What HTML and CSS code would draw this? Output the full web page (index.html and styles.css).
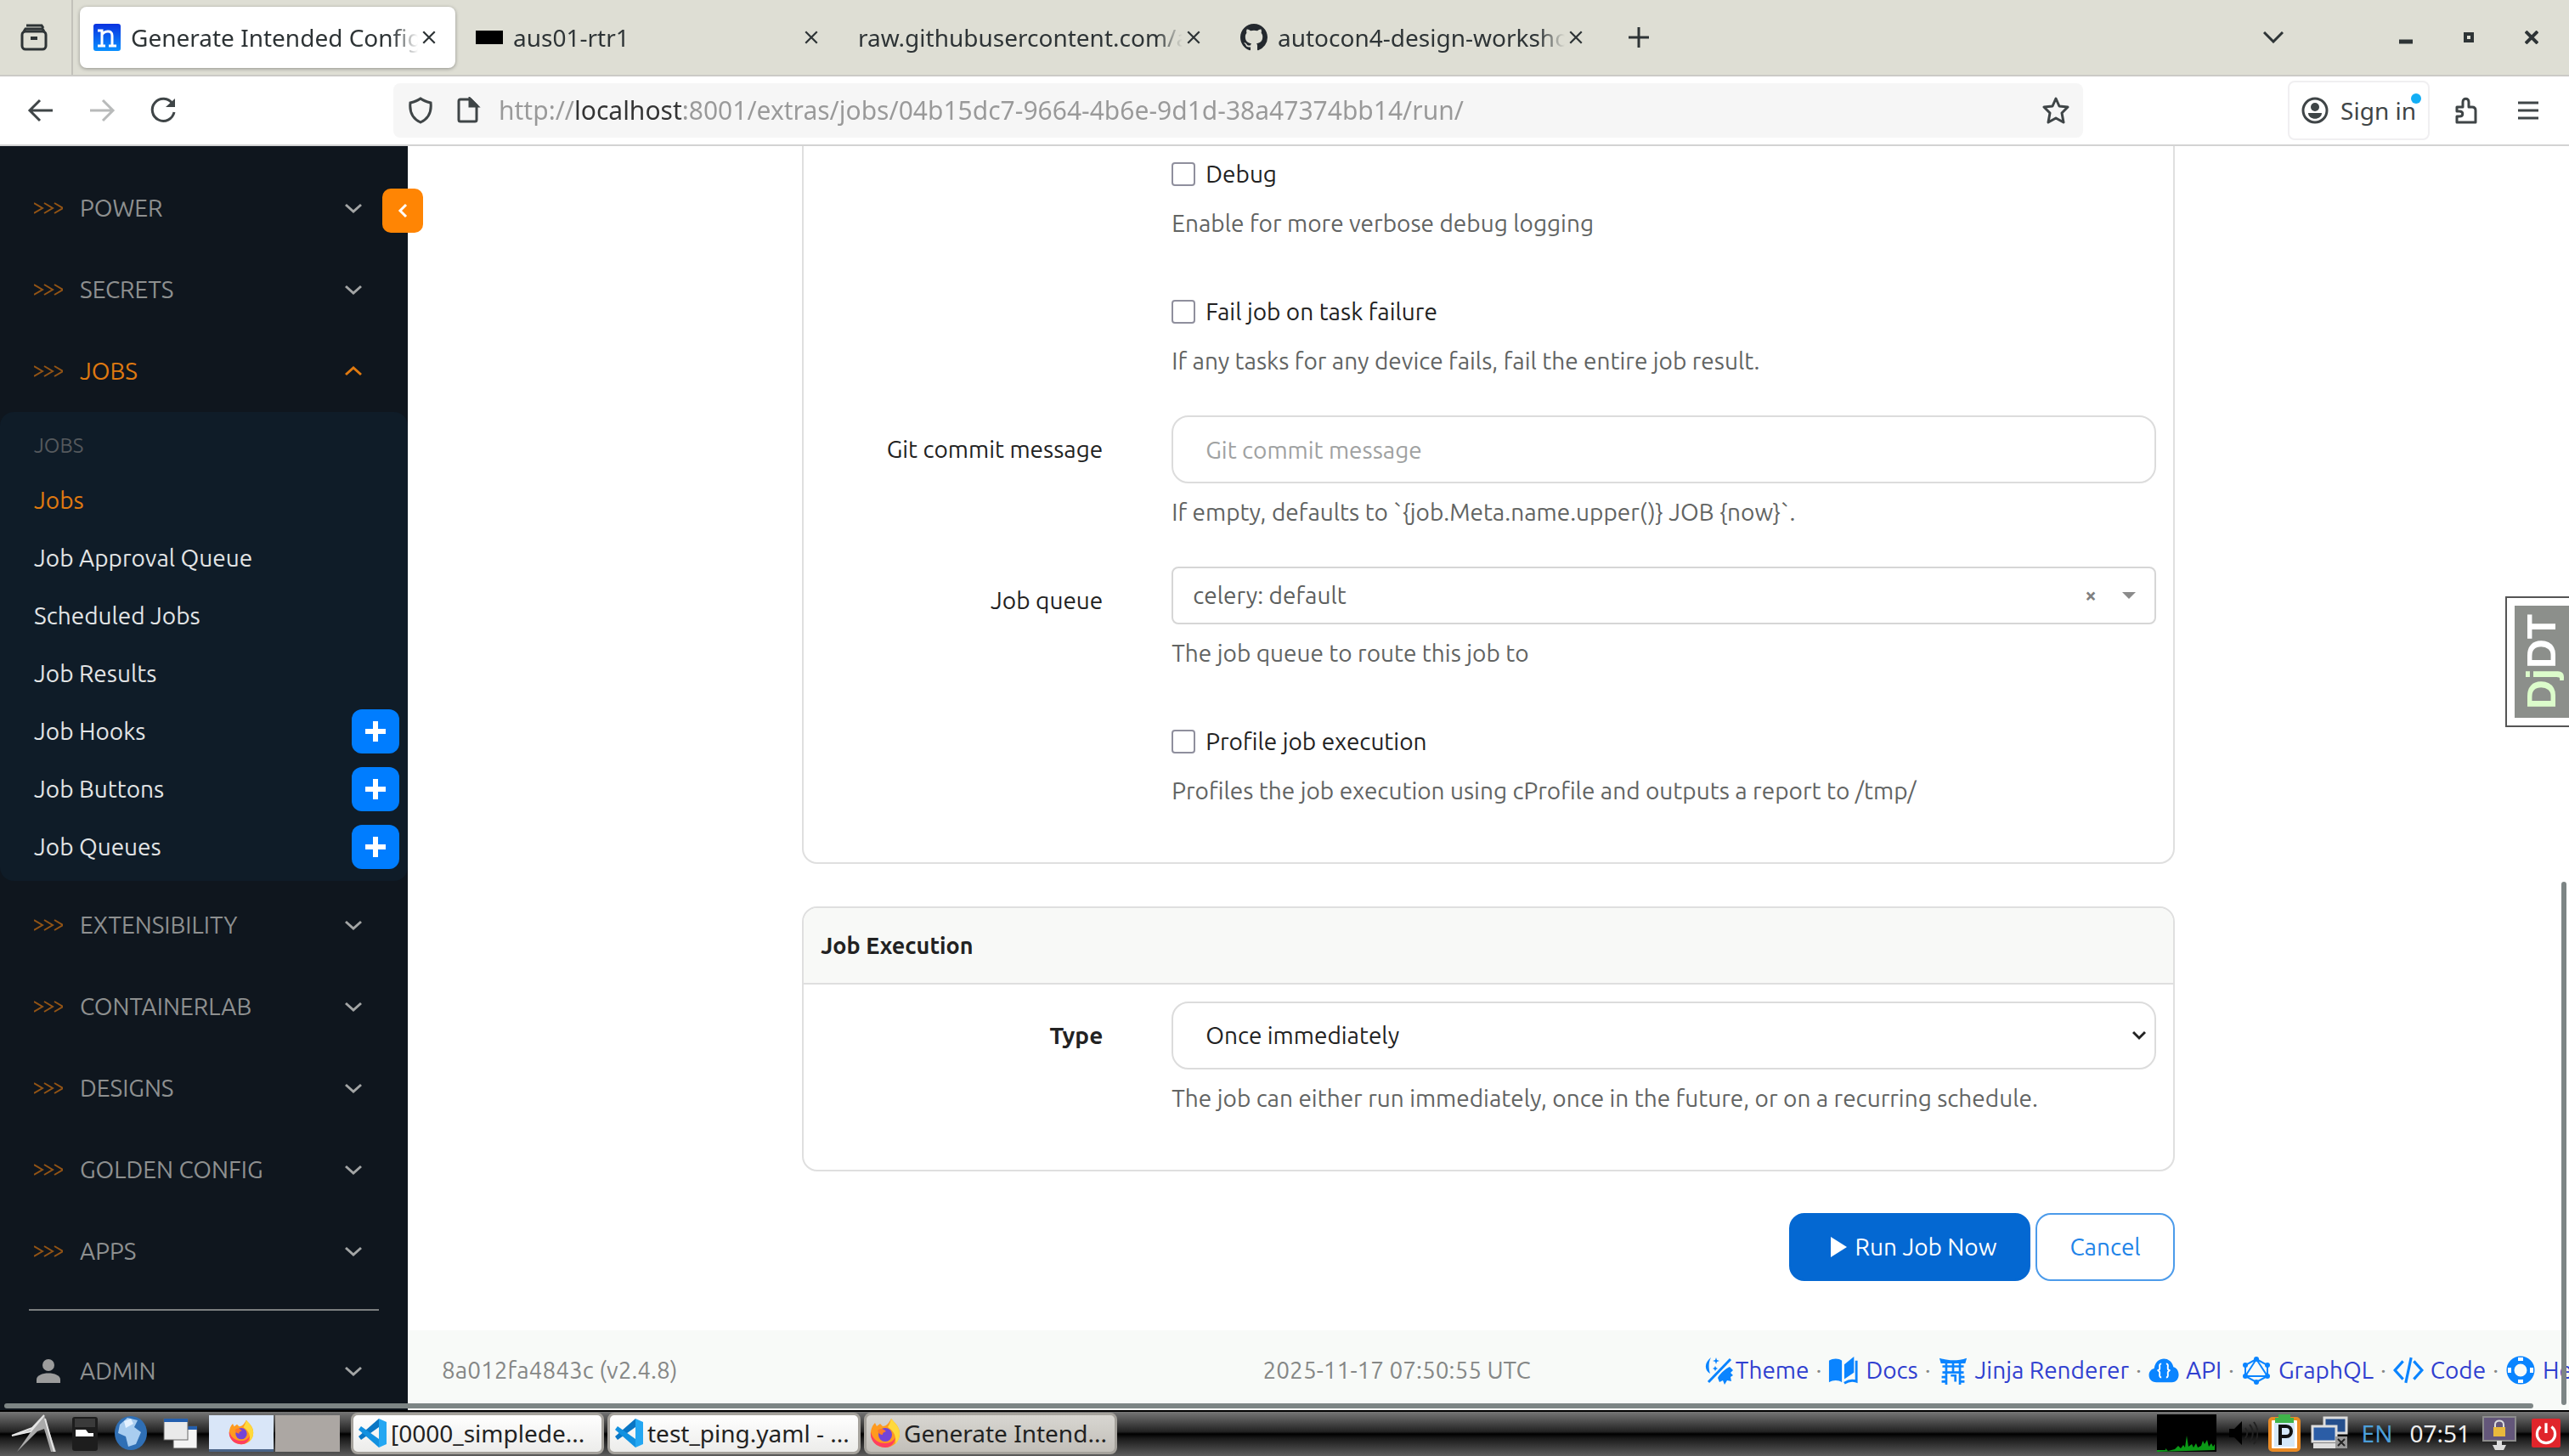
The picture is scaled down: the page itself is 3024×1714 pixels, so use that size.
FILE: index.html
```html
<!DOCTYPE html>
<html lang="en">
<head>
  <meta charset="UTF-8" />
  <meta name="viewport" content="width=device-width, initial-scale=1.0"/>
  <title>Generate Intended Configurations</title>
  <link rel="stylesheet" href="styles.css">
</head>
<body>

<!-- Shared icons -->
<svg class="sprite" aria-hidden="true">
  <symbol id="i-close" viewBox="0 0 16 16"><path d="M2 2l12 12M14 2L2 14" fill="none" stroke="currentColor" stroke-width="2"/></symbol>
  <symbol id="i-down" viewBox="0 0 20 12"><path d="M1 2l9 8 9-8" fill="none" stroke="currentColor" stroke-width="3"/></symbol>
  <symbol id="i-up" viewBox="0 0 20 12"><path d="M1 10l9-8 9 8" fill="none" stroke="currentColor" stroke-width="3"/></symbol>
  <symbol id="i-arrows" viewBox="0 0 34 14"><path d="M0 1l10 6-10 6M12 1l10 6-10 6M24 1l10 6-10 6" fill="none" stroke="currentColor" stroke-width="2"/></symbol>
  <symbol id="i-plus" viewBox="0 0 24 24"><path d="M12 0v24M0 12h24" fill="none" stroke="currentColor" stroke-width="6"/></symbol>
  <symbol id="i-vscode" viewBox="0 0 36 36"><path d="M26 1l9 4v26l-9 4z" fill="#24a7f2"/><path d="M26 1L2 22l3 4 21-15z" fill="#0a76c4"/><path d="M26 35L2 14l3-4 21 15z" fill="#1291e0"/></symbol>
  <symbol id="i-firefox" viewBox="0 0 36 36">
    <path d="M25 1c4 5 10 9 10 18a17 16 0 0 1-34 0C1 13 3 9 6 6l2 4 4-3 3 3c5 0 8-5 10-9z" fill="#ff9a1f"/>
    <path d="M25 1c4 5 10 9 10 18 0 5-2 9-5 12 1-9-1-15-9-20 2-3 3-6 4-10z" fill="#ffd93b"/>
    <path d="M1 17c3 10 10 13 17 13 6 0 10-3 12-7-1 8-6 12-12 12A17 16 0 0 1 1 17z" fill="#ff3f5f"/>
    <circle cx="18" cy="20" r="8" fill="#7544d6"/><path d="M9 15c4-4 8-1 10 1-2 1-4 1-4 4-3 0-5-2-6-5z" fill="#ff7a2a"/>
  </symbol>
</svg>

<!-- Browser tabs -->
<header class="tabbar">
  <button class="tab-history" aria-label="Recent tabs">
    <svg viewBox="0 0 32 32"><path d="M7 2h18l2 3M4 9l2-3h20l2 3" /><rect x="2" y="9" width="28" height="21" rx="4"/><path d="M12 17h8" stroke-width="4"/></svg>
  </button>
  <div class="tabs">
    <div class="tab active">
      <svg class="favicon" viewBox="0 0 32 32"><defs><linearGradient id="nb" x2="0" y2="1"><stop offset="0" stop-color="#0a32e0"/><stop offset="1" stop-color="#0a90ff"/></linearGradient></defs><rect width="32" height="32" rx="3" fill="url(#nb)"/><path d="M5 8h5v17M5 26h9M10 13c2-4 12-7 12 1v12M18 26h9" fill="none" stroke="#fff" stroke-width="3"/></svg>
      <span class="tab-title">Generate Intended Config</span>
      <button class="tab-close" aria-label="Close tab"><svg><use href="#i-close"/></svg></button>
    </div>
    <div class="tab">
      <svg class="favicon" viewBox="0 0 32 32"><path d="M0 8h32v16H0z"/></svg>
      <span class="tab-title">aus01-rtr1</span>
      <button class="tab-close" aria-label="Close tab"><svg><use href="#i-close"/></svg></button>
    </div>
    <div class="tab">
      <span class="tab-title">raw.githubusercontent.com/a</span>
      <button class="tab-close" aria-label="Close tab"><svg><use href="#i-close"/></svg></button>
    </div>
    <div class="tab">
      <svg class="favicon" viewBox="0 0 16 16"><path fill="#24292e" d="M8 0C3.58 0 0 3.58 0 8c0 3.54 2.29 6.53 5.47 7.59.4.07.55-.17.55-.38 0-.19-.01-.82-.01-1.49-2.01.37-2.53-.49-2.69-.94-.09-.23-.48-.94-.82-1.13-.28-.15-.68-.52-.01-.53.63-.01 1.08.58 1.23.82.72 1.21 1.87.87 2.33.66.07-.52.28-.87.51-1.07-1.78-.2-3.64-.89-3.64-3.95 0-.87.31-1.59.82-2.15-.08-.2-.36-1.02.08-2.12 0 0 .67-.21 2.2.82.64-.18 1.32-.27 2-.27s1.36.09 2 .27c1.53-1.04 2.2-.82 2.2-.82.44 1.1.16 1.92.08 2.12.51.56.82 1.27.82 2.15 0 3.07-1.87 3.75-3.65 3.95.29.25.54.73.54 1.48 0 1.07-.01 1.93-.01 2.2 0 .21.15.46.55.38A8.01 8.01 0 0 0 16 8c0-4.42-3.58-8-8-8z"/></svg>
      <span class="tab-title">autocon4-design-worksho</span>
      <button class="tab-close" aria-label="Close tab"><svg><use href="#i-close"/></svg></button>
    </div>
  </div>
  <button class="tab-new" aria-label="New tab"><svg viewBox="0 0 24 24"><path d="M12 0v24M0 12h24"/></svg></button>
  <div class="window-controls">
    <button class="tab-list" aria-label="List all tabs"><svg viewBox="0 0 24 14"><path d="M1 1l11 11L23 1"/></svg></button>
    <button aria-label="Minimize"><svg viewBox="0 0 16 16"><path d="M0 13h16" stroke-width="5"/></svg></button>
    <button aria-label="Maximize"><svg viewBox="0 0 16 16"><path d="M4 4h8v8H4z" stroke-width="4"/></svg></button>
    <button aria-label="Close window"><svg viewBox="0 0 16 16"><path d="M1 1l14 14M15 1L1 15" stroke-width="4"/></svg></button>
  </div>
</header>

<!-- Browser toolbar -->
<div class="toolbar">
  <div class="nav-buttons">
    <button aria-label="Back"><svg viewBox="0 0 32 32"><path d="M30 16H3M15 4L3 16l12 12"/></svg></button>
    <button aria-label="Forward" disabled><svg viewBox="0 0 32 32"><path d="M2 16h27M17 4l12 12-12 12"/></svg></button>
    <button aria-label="Reload"><svg viewBox="0 0 32 32"><path d="M27 8a13 13 0 1 0 2 10"/><path d="M30 2v10H19z" fill="currentColor" stroke="none"/></svg></button>
  </div>
  <div class="urlbar">
    <svg viewBox="0 0 32 32"><path d="M16 2c4 3 8 4 12 5 1 9-1 18-12 23C5 25 3 16 4 7c4-1 8-2 12-5z"/></svg>
    <svg viewBox="0 0 32 32"><path d="M7 3h12l7 7v17q0 2-2 2H7q-2 0-2-2V5q0-2 2-2z"/><path d="M18 2l9 9h-9z" fill="currentColor"/></svg>
    <input class="url" type="text" aria-label="Address" value="http://localhost:8001/extras/jobs/04b15dc7-9664-4b6e-9d1d-38a47374bb14/run/">
    <button aria-label="Bookmark"><svg viewBox="0 0 32 32"><path d="M16 2l4 9 10 1-7 7 2 11-9-5-9 5 2-11-7-7 10-1z" stroke-linejoin="round"/></svg></button>
  </div>
  <div class="toolbar-end">
    <button class="signin">
      <svg viewBox="0 0 32 32"><circle cx="16" cy="16" r="14"/><circle cx="16" cy="12" r="5" fill="currentColor" stroke="none"/><path d="M8 19h16c0 9-16 9-16 0z" fill="currentColor" stroke="none"/></svg>
      <span class="signin-label">Sign in<span class="dot"></span></span>
    </button>
    <button aria-label="Extensions"><svg viewBox="0 0 32 32"><path d="M4 12h7V6c0-5 7-5 7 0v6h4q4 0 4 4v14H4v-7h3c5 0 5-6 0-6H4z" stroke-linejoin="round"/></svg></button>
    <button aria-label="Menu"><svg viewBox="0 0 32 32"><path d="M4 7h24M4 16h24M4 25h24"/></svg></button>
  </div>
</div>

<!-- Page -->
<div class="page">
  <nav class="sidebar">
    <button class="group"><svg class="arrows"><use href="#i-arrows"/></svg>POWER<svg class="chev"><use href="#i-down"/></svg></button>
    <button class="group"><svg class="arrows"><use href="#i-arrows"/></svg>SECRETS<svg class="chev"><use href="#i-down"/></svg></button>
    <button class="group open"><svg class="arrows"><use href="#i-arrows"/></svg>JOBS<svg class="chev"><use href="#i-up"/></svg></button>
    <div class="submenu">
      <h6>JOBS</h6>
      <ul>
        <li class="active"><a href="#">Jobs</a></li>
        <li><a href="#">Job Approval Queue</a></li>
        <li><a href="#">Scheduled Jobs</a></li>
        <li><a href="#">Job Results</a></li>
        <li><a href="#">Job Hooks</a><button class="add" aria-label="Add job hook"><svg><use href="#i-plus"/></svg></button></li>
        <li><a href="#">Job Buttons</a><button class="add" aria-label="Add job button"><svg><use href="#i-plus"/></svg></button></li>
        <li><a href="#">Job Queues</a><button class="add" aria-label="Add job queue"><svg><use href="#i-plus"/></svg></button></li>
      </ul>
    </div>
    <button class="group"><svg class="arrows"><use href="#i-arrows"/></svg>EXTENSIBILITY<svg class="chev"><use href="#i-down"/></svg></button>
    <button class="group"><svg class="arrows"><use href="#i-arrows"/></svg>CONTAINERLAB<svg class="chev"><use href="#i-down"/></svg></button>
    <button class="group"><svg class="arrows"><use href="#i-arrows"/></svg>DESIGNS<svg class="chev"><use href="#i-down"/></svg></button>
    <button class="group"><svg class="arrows"><use href="#i-arrows"/></svg>GOLDEN CONFIG<svg class="chev"><use href="#i-down"/></svg></button>
    <button class="group"><svg class="arrows"><use href="#i-arrows"/></svg>APPS<svg class="chev"><use href="#i-down"/></svg></button>
    <hr>
    <button class="group"><svg class="user" viewBox="0 0 34 28"><circle cx="17" cy="7" r="7"/><path d="M3 28v-4c0-10 28-10 28 0v4z"/></svg>ADMIN<svg class="chev"><use href="#i-down"/></svg></button>
    <button class="collapse" aria-label="Collapse menu"><svg viewBox="0 0 12 18"><path d="M10 2L3 9l7 7"/></svg></button>
  </nav>

  <main>
    <form class="job-form">
      <section class="card card-data">
        <div class="field">
          <div class="control check">
            <label><input type="checkbox">Debug</label>
            <p class="help">Enable for more verbose debug logging</p>
          </div>
        </div>
        <div class="field">
          <div class="control check">
            <label><input type="checkbox">Fail job on task failure</label>
            <p class="help">If any tasks for any device fails, fail the entire job result.</p>
          </div>
        </div>
        <div class="field">
          <label class="name" for="commit">Git commit message</label>
          <div class="control">
            <input class="text" id="commit" type="text" placeholder="Git commit message">
            <p class="help">If empty, defaults to `{job.Meta.name.upper()} JOB {now}`.</p>
          </div>
        </div>
        <div class="field">
          <label class="name" for="queue">Job queue</label>
          <div class="control">
            <div class="select2">
              <select id="queue"><option>celery: default</option></select>
              <button type="button" class="clear" aria-label="Clear">×</button>
              <span class="caret"></span>
            </div>
            <p class="help">The job queue to route this job to</p>
          </div>
        </div>
        <div class="field">
          <div class="control check">
            <label><input type="checkbox">Profile job execution</label>
            <p class="help">Profiles the job execution using cProfile and outputs a report to /tmp/</p>
          </div>
        </div>
      </section>

      <section class="card card-exec">
        <h2>Job Execution</h2>
        <div class="field">
          <label class="name" for="type"><b>Type</b></label>
          <div class="control">
            <div class="select-wrap">
              <select class="text" id="type"><option>Once immediately</option></select>
              <svg viewBox="0 0 16 12"><path d="M1 2l7 7 7-7"/></svg>
            </div>
            <p class="help">The job can either run immediately, once in the future, or on a recurring schedule.</p>
          </div>
        </div>
      </section>

      <div class="actions">
        <button type="submit" class="btn primary"><svg viewBox="0 0 20 24"><path d="M1 0l19 12L1 24z"/></svg>Run Job Now</button>
        <a class="btn" href="#">Cancel</a>
      </div>
    </form>

    <footer class="footer">
      <span>8a012fa4843c (v2.4.8)</span>
      <span>2025-11-17 07:50:55 UTC</span>
      <div class="links">
        <a class="theme" href="#"><svg viewBox="0 0 34 34"><path d="M8 2C0 8 0 17 7 21 5 14 5 8 8 2z"/><path d="M5 31L31 4" fill="none" stroke="currentColor" stroke-width="3"/><path d="M14 2l1 3 3 1-3 1-1 3-1-3-3-1 3-1zM13 12l1 2 2 1-2 1-1 2-1-2-2-1 2-1z"/><path d="M30 13c-6 3-12 9-14 13l2 5 4-2 2 5 3-5 5 1-1-5 3-2-3-3 3-3z"/></svg>Theme</a><i>·</i>
        <a href="#"><svg viewBox="0 0 38 34"><path d="M1 5c5-3 12-3 16 0v27c-4-3-11-3-16 0zM20 10L32 0v20L20 28z"/><path d="M35 5v26c-5-2-10-1-15 2" fill="none" stroke="currentColor" stroke-width="3"/></svg>Docs</a><i>·</i>
        <a href="#"><svg viewBox="0 0 38 38"><path d="M1 3c12 4 24 4 36 0l-2 7H3z"/><path d="M5 14h28M5 22h28M10 9v29M19 9v13M28 9v29M4 28h7M4 34h7M27 28h7M27 34h7M16 26h6v8" fill="none" stroke="currentColor" stroke-width="3"/></svg>Jinja Renderer</a><i>·</i>
        <a href="#"><svg viewBox="0 0 38 30"><path d="M10 30C-2 30-2 15 7 13 9-3 28-3 31 11c9 2 9 19-2 19z"/><path d="M16 7c-3 0-2 3-2 5s-1 3-2 3 2 1 2 3-1 6 2 6M22 7c3 0 2 3 2 5s1 3 2 3-2 1-2 3 1 6-2 6" fill="none" stroke="#fff" stroke-width="2"/></svg>API</a><i>·</i>
        <a href="#"><svg viewBox="0 0 34 34"><path d="M17 4L4 11v13l13 7 13-7V11zM17 4L4 24h26z" fill="none" stroke="currentColor" stroke-width="2"/><circle cx="17" cy="4" r="3"/><circle cx="4" cy="11" r="3"/><circle cx="30" cy="11" r="3"/><circle cx="4" cy="24" r="3"/><circle cx="30" cy="24" r="3"/><circle cx="17" cy="31" r="3"/></svg>GraphQL</a><i>·</i>
        <a href="#"><svg viewBox="0 0 34 30"><path d="M11 5L2 15l9 10M23 5l9 10-9 10M20 1l-6 28" fill="none" stroke="currentColor" stroke-width="3"/></svg>Code</a><i>·</i>
        <a href="#"><svg viewBox="0 0 34 34"><circle cx="17" cy="17" r="12" fill="none" stroke="currentColor" stroke-width="9"/><path d="M14 4h6M14 30h6M4 14v6M30 14v6" stroke="#fff" stroke-width="4"/></svg>Help</a>
      </div>
    </footer>

    <div class="djdt"><button aria-label="Show toolbar"><span><b>Dj</b>DT</span></button></div>
  </main>
  <div class="scroll-y"></div>
  <div class="scroll-x"></div>
</div>

<!-- Desktop panel -->
<div class="taskbar">
  <div class="launchers">
    <button aria-label="Menu"><svg viewBox="0 0 56 44"><path d="M42 1L28 16 4 25l22-4L10 44 34 20l8-3 8 27h6L46 14z" fill="#aaa"/><path d="M42 1L28 16 4 25l22-5zM43 5l11 39" fill="none" stroke="#e4e4e4" stroke-width="2"/></svg></button>
    <button aria-label="Files"><svg viewBox="0 0 32 44"><rect x="1" y="3" width="30" height="40" rx="3" fill="#1d1d1d"/><path d="M5 26V18h12l3 4h6v4z" fill="#fff"/><rect x="4" y="5" width="24" height="10" fill="#3a3a3a"/></svg></button>
    <button aria-label="Web browser"><svg viewBox="0 0 40 44"><ellipse cx="20" cy="22" rx="19" ry="20" fill="#2f6fb5"/><path d="M7 12l9-8 12 3-4 8 8 6-6 14-9 3-3-12-9-4z" fill="#a9cdf0"/><path d="M12 8l8-3 3 6-9 5z" fill="#e4f1ff"/></svg></button>
    <button aria-label="Show desktop"><svg viewBox="0 0 40 40"><rect x="12" y="12" width="28" height="26" fill="#f4f4f4" stroke="#555"/><path d="M12 12h28v4H12z" fill="#245fae"/><rect x="1" y="3" width="28" height="25" fill="#eaeaea" stroke="#666"/><path d="M1 3h28v4H1z" fill="#245fae"/></svg></button>
  </div>
  <div class="pager">
    <button class="on" aria-label="Desktop 1"><svg><use href="#i-firefox"/></svg></button>
    <button aria-label="Desktop 2"></button>
  </div>
  <div class="tasks">
    <button><svg><use href="#i-vscode"/></svg><span>[0000_simplede...</span></button>
    <button><svg><use href="#i-vscode"/></svg><span>test_ping.yaml - ...</span></button>
    <button class="on"><svg><use href="#i-firefox"/></svg><span>Generate Intend...</span></button>
  </div>
  <div class="tray">
    <svg class="cpu" viewBox="0 0 70 44"><path d="M0 0h70v44H0z"/><path d="M0 44v-2h10v-2l3 3 8-2 4-4 3 3 3-4 2 3 2-14 2 13 4-3 2 4 3-5 2 5 4-2 2-6 2 4 3-5 2 8 3-4 2 4 2-3v7z" fill="#0b9a16"/></svg>
    <svg class="vol" viewBox="0 0 36 36"><path d="M2 13h6l9-9v28l-9-9H2z"/><path d="M21 12c3 4 3 8 0 12M26 8c5 6 5 14 0 20M31 5c6 8 6 18 0 26" fill="none" stroke="#222" stroke-width="2"/></svg>
    <svg class="clip" viewBox="0 0 38 44"><rect x="2" y="5" width="34" height="37" rx="3" fill="#fff" stroke="#e98a24" stroke-width="4"/><path d="M7 10h24v28H7z" fill="#d5e8f8"/><path d="M12 0h14v4h4v6H8V4h4z" fill="#3fb54a"/><path d="M14 36V14h7c8 0 8 12 0 12h-6" fill="none" stroke="#111" stroke-width="4"/></svg>
    <svg class="net" viewBox="0 0 44 40"><rect x="16" y="2" width="26" height="18" fill="#254f8d" stroke="#ddd" stroke-width="3"/><rect x="2" y="12" width="28" height="18" fill="#2b5da6" stroke="#ddd" stroke-width="3"/><path d="M3 35h26" stroke="#ddd" stroke-width="6"/><path d="M29 24h14v14H29z" fill="#999"/><path d="M32 27l8 8M40 27l-8 8" stroke="#222" stroke-width="2"/></svg>
    <span class="lang">EN</span>
    <span class="clock">07:51</span>
    <svg class="lock" viewBox="0 0 40 42"><rect x="1" y="2" width="38" height="28" fill="#63567a" stroke="#8c8c8c" stroke-width="2"/><path d="M15 15v-4c0-6 10-6 10 0v4" fill="none" stroke="#ddd" stroke-width="2"/><rect x="13" y="14" width="14" height="11" fill="#e9b93c"/><path d="M17 30h6v5h5l-3 6H15l-3-6h5z" fill="#ddd"/></svg>
    <svg class="power" viewBox="0 0 32 32"><rect width="32" height="32" rx="2" fill="#e0252b"/><path d="M10 9a10 10 0 1 0 12 0M16 5v11" fill="none" stroke="#fff" stroke-width="3"/></svg>
  </div>
</div>

</body>
</html>
```
FILE: styles.css
```css
* { box-sizing: border-box; }

html, body {
  margin: 0; padding: 0;
  overflow: hidden;
}

body {
  display: flex;
  flex-direction: column;
  height: 100vh;
  font-family: Ubuntu, "Noto Sans", sans-serif;
  font-size: 28px;
  line-height: 40px;
  color: #222;
  background: #fff;
}

button, input, select {
  font: inherit;
  color: inherit;
  margin: 0; padding: 0;
  border: 0;
  background: none;
}

a { text-decoration: none; }
svg { display: block; flex: none; }
.sprite { position: absolute; width: 0; height: 0; }

/* Tabs */
.tabbar {
  display: flex;
  align-items: center;
  flex: none;
  height: 90px;
  background: #deded4;
  border-bottom: 2px solid #cbcac6;
  font-family: "Noto Sans", sans-serif;
  color: #2e3436;
}

.tabbar svg, .toolbar svg { fill: none; stroke: currentColor; stroke-width: 3; }
.tabbar .favicon { fill: #000; stroke: none; width: 32px; height: 32px; }

.tab-history {
  width: 86px; height: 88px;
  padding-left: 24px;
  border-right: 2px solid #c2c1ba;
}
.tab-history svg { width: 32px; height: 32px; }

.tabs { display: flex; gap: 8px; padding-left: 8px; }

.tab {
  display: flex;
  align-items: center;
  gap: 12px;
  width: 442px; height: 72px;
  padding: 0 22px 0 16px;
  border-radius: 8px;
}
.tab.active { background: #fff; box-shadow: 0 1px 4px rgba(0, 0, 0, 0.35); }

.tab-title {
  flex: 1;
  overflow: hidden;
  white-space: nowrap;
  mask-image: linear-gradient(to left, transparent, #000 30px);
}
.tab-close svg { width: 18px; height: 18px; }
.tab-close { margin-left: -8px; }
.tab-new { margin-left: 31px; }
.tab-new svg { width: 24px; height: 24px; }

.window-controls {
  display: flex;
  align-items: center;
  gap: 58px;
  margin-left: auto;
  padding-right: 36px;
}
.window-controls svg { width: 16px; height: 16px; }
.tab-list { margin-right: 78px; }
.window-controls .tab-list svg { width: 24px; height: 14px; }

/* Toolbar */
.toolbar {
  display: flex;
  align-items: center;
  flex: none;
  height: 82px;
  padding: 0 32px;
  border-bottom: 2px solid #d3d3d3;
  font-family: "Noto Sans", sans-serif;
  color: #3f4547;
}
.toolbar svg { width: 32px; height: 32px; }
.nav-buttons { display: flex; gap: 40px; width: 431px; }
.nav-buttons button:disabled { color: #b8baba; }

.urlbar {
  display: flex;
  align-items: center;
  gap: 24px;
  width: 67.2%;
  height: 64px;
  padding: 0 16px;
  background: #f6f6f6;
  border-radius: 8px;
}

.url {
  flex: 1;
  margin-left: -4px;
  font-size: 30px;
  color: transparent;
  background: linear-gradient(to right, #999 89px, #333 89px, #333 216px, #999 216px);
  background-clip: text;
}

.toolbar-end {
  display: flex;
  align-items: center;
  gap: 28px;
  margin-left: auto;
}
.toolbar-end svg { width: 32px; height: 32px; }
.toolbar-end button + button + button { margin-left: 12px; }

.signin {
  display: flex;
  align-items: center;
  gap: 14px;
  height: 70px;
  padding: 0 14px;
  border: 2px solid #f0eff1;
  border-radius: 8px;
}
.signin-label { position: relative; }
.dot {
  position: absolute;
  top: 0; right: -6px;
  width: 12px; height: 12px;
  border-radius: 50%;
  background: #12aef5;
}

/* Page */
.page { position: relative; display: flex; flex: 1; min-height: 0; }

.sidebar {
  position: relative;
  flex: none;
  width: 480px;
  padding-top: 25px;
  background: #0f161e;
}

.group {
  display: flex;
  align-items: center;
  gap: 20px;
  width: 100%; height: 96px;
  padding: 0 54px 0 40px;
  color: #8e9090;
}
.group.open { color: #e07a10; }
.group .arrows { width: 34px; height: 14px; color: #935415; }
.group .user { width: 34px; height: 28px; fill: #9c9c9c; }
.group .chev { width: 20px; height: 12px; margin-left: auto; color: #a3a5a5; }
.group.open .chev { color: #e07a10; }

.submenu {
  margin-bottom: 4px;
  padding: 20px 0 6px 40px;
  background: #0f1c28;
  border-radius: 16px;
}
.submenu h6 {
  margin: 0 0 10px;
  font-size: 24px;
  font-weight: 400;
  color: #55595d;
}
.submenu ul { margin: 0; padding: 0; list-style: none; }
.submenu li {
  display: flex;
  align-items: center;
  justify-content: space-between;
  height: 68px;
  padding-right: 10px;
}
.submenu a { color: #e2e4e5; }
.submenu .active a { color: #e07a10; }

.add {
  display: grid;
  place-items: center;
  width: 56px; height: 52px;
  color: #fff;
  background: #007dff;
  border-radius: 12px;
}
.add svg { width: 24px; height: 24px; }

.sidebar hr {
  margin: 20px 34px 23px;
  border: 0;
  border-top: 2px solid #7b7e7f;
}

.collapse {
  position: absolute;
  top: 50px; right: -18px;
  z-index: 2;
  display: grid;
  place-items: center;
  width: 48px; height: 52px;
  background: #ff8504;
  border-radius: 10px;
}
.collapse svg { width: 12px; height: 18px; fill: none; stroke: #fff; stroke-width: 3; }

main {
  position: relative;
  display: flex;
  flex-direction: column;
  flex: 1;
  min-width: 0;
  overflow: hidden;
}

.job-form { width: 63.5%; margin: 0 auto; }

.card {
  border: 2px solid #dfdfdf;
  border-radius: 18px;
}
.card-data {
  padding: 13px 20px 20px;
  border-top: 0;
  border-top-left-radius: 0;
  border-top-right-radius: 0;
}
.card-exec { margin-top: 50px; }

.card h2 {
  margin: 0;
  padding: 24px 20px;
  font-size: 27px;
  background: #f8f9f7;
  border-bottom: 2px solid #dfdfdf;
  border-radius: 16px 16px 0 0;
}

.field {
  display: grid;
  grid-template-columns: 332px 1fr;
  column-gap: 81px;
  margin-bottom: 44px;
}
.field .name { line-height: 80px; text-align: right; }
.field:last-child { padding-bottom: 44px; margin-bottom: 0; }
.card-exec .field { padding: 20px 20px 64px; }
.control { grid-column: 2; }

.check { padding-top: 20px; }
.field:first-child .check { padding-top: 0; }
.check label { display: flex; align-items: center; gap: 12px; }
.check input {
  appearance: none;
  width: 28px; height: 28px;
  border: 2px solid #8f8f9d;
  border-radius: 4px;
  background: #fff;
}

.help { margin: 14px 0 0; color: #626463; }
.check .help { margin-top: 18px; }

.text {
  display: block;
  width: 100%; height: 80px;
  padding: 0 38px;
  border: 2px solid #dcdcdc;
  border-radius: 20px;
  background: #fff;
  appearance: none;
}
.text::placeholder { color: #a0a2a2; opacity: 1; }

.select-wrap, .select2 { position: relative; }
.select-wrap svg {
  position: absolute;
  top: 34px; right: 12px;
  width: 16px; height: 12px;
  fill: none; stroke: #222; stroke-width: 3;
}

.select2 select {
  display: block;
  width: 100%; height: 68px;
  padding: 0 23px;
  border: 2px solid #d6d6d6;
  border-radius: 8px;
  appearance: none;
  color: #5d5f5e;
}
.clear { position: absolute; top: 14px; right: 70px; color: #808080; font-weight: 700; font-size: 24px; }
.caret {
  position: absolute;
  top: 30px; right: 24px;
  border: 8px solid transparent;
  border-top-color: #8b8b8b;
  border-bottom: 0;
}

.actions {
  display: flex;
  justify-content: flex-end;
  gap: 6px;
  margin-top: 49px;
}
.btn {
  display: flex;
  align-items: center;
  gap: 10px;
  height: 80px;
  padding: 0 38px;
  border: 2px solid #4c9bea;
  border-radius: 18px;
  color: #1f84e8;
}
.btn.primary { padding: 0 38px 0 46px; color: #fff; background: #0468d2; border-color: #0468d2; }
.btn svg { width: 20px; height: 24px; fill: #fff; }

.footer {
  display: grid;
  grid-template-columns: 38.6% 20.7% max-content;
  align-items: center;
  height: 94px;
  margin-top: auto;
  padding-left: 40px;
  color: #858786;
  background: #f8faf8;
  white-space: nowrap;
}
.links { display: flex; gap: 8px; }
.links a { display: flex; align-items: center; gap: 8px; color: #3040d0; }
.links .theme { gap: 2px; }
.links i { font-style: normal; }
.links svg { width: 36px; height: 34px; fill: currentColor; color: #0a84ff; }

.djdt {
  position: absolute;
  top: 530px; right: 0;
  width: 75px; height: 154px;
  padding: 9px 0 9px 9px;
  border: 2px solid #555;
  border-right: 0;
  background: #fff;
}
.djdt button {
  display: grid;
  place-items: center;
  width: 100%; height: 100%;
  background: #8c8f8b;
  color: #fff;
  font: bold 48px/48px "Liberation Sans", sans-serif;
}
.djdt span { writing-mode: vertical-rl; rotate: 180deg; }
.djdt b { color: #dcfccb; }

.scroll-y, .scroll-x { position: absolute; z-index: 3; background: #7d8585; border-radius: 3px; }
.scroll-y { right: 3px; top: 866px; bottom: 6px; width: 6px; }
.scroll-x { left: 5px; right: 42px; bottom: 2px; height: 6px; }

/* Desktop panel */
.taskbar {
  display: flex;
  align-items: center;
  flex: none;
  height: 54px;
  padding-bottom: 2px;
  border-top: 2px solid #000;
  background: linear-gradient(#767676, #222 45%, #000 50%, #1a1a1a 60%, #5c5c5c);
  font-family: "Noto Sans", sans-serif;
  line-height: 36px;
}
.launchers { display: flex; gap: 18px; width: 246px; padding-left: 10px; }
.launchers svg { width: 40px; height: 44px; }
.launchers button:first-child svg { width: 56px; }
.launchers button:nth-child(2) svg { width: 32px; }

.pager { display: flex; gap: 2px; width: 167px; }
.pager button { width: 76px; height: 43px; background: #aca7a3; }
.pager .on { background: #d9e6f8; border-bottom: 3px solid #4a6488; }
.pager svg { width: 30px; height: 30px; margin: 0 auto; }

.tasks { display: flex; gap: 4px; }
.tasks button {
  display: flex;
  align-items: center;
  gap: 4px;
  width: 298px; height: 49px;
  padding: 0 4px;
  white-space: nowrap;
  color: #222;
  border: 3px solid #a5a29c;
  border-radius: 8px;
  background: linear-gradient(#fff, #ececea);
}
.tasks .on { background: linear-gradient(#d8d6d1, #c2bfb9); }
.tasks svg { width: 36px; height: 36px; }

.tray { display: flex; align-items: center; margin-left: auto; padding-right: 10px; color: #eee; }
.cpu { width: 72px; height: 44px; margin-right: 12px; }
.vol { width: 36px; height: 36px; margin-right: 12px; }
.clip { width: 38px; height: 44px; margin-right: 12px; }
.net { width: 44px; height: 40px; margin-right: 16px; }
.lang { margin-right: 20px; color: #4d9fd8; }
.clock { margin-right: 14px; }
.lock { width: 40px; height: 42px; margin-right: 18px; }
.power { width: 34px; height: 34px; }
```
